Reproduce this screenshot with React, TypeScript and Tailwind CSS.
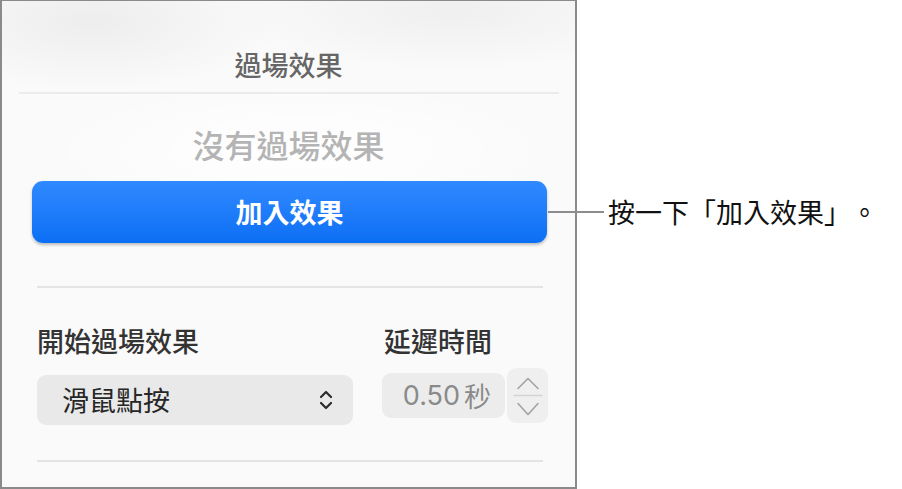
import React from 'react';

const cjk = 'font-["Noto_Sans_CJK_TC","Noto_Sans",sans-serif]';

const SelectChevrons = () => (
    <svg width="16" height="24" viewBox="0 0 16 24" fill="none" stroke="#2b2b2b" strokeWidth="2.2" strokeLinecap="round" strokeLinejoin="round">
        <path d="M3 9 L8 4 L13 9" />
        <path d="M3 15 L8 20 L13 15" />
    </svg>
);

const Stepper = () => (
    <div className="w-[41px] h-[55px] rounded-[9px] bg-[#efefef] flex flex-col items-center justify-center">
        <svg width="30" height="46" viewBox="0 0 30 46" fill="none" stroke="#a3a3a3" strokeWidth="1.6" strokeLinecap="round" strokeLinejoin="round">
            <path d="M5 15.5 L15 5.5 L25 15.5" />
            <path d="M1 22.5 L29 22.5" stroke="#d4d4d4" strokeWidth="1.4" />
            <path d="M5 30.5 L15 41.5 L25 30.5" />
        </svg>
    </div>
);

export default function App() {
    return (
        <div lang="zh-Hant-TW" className={`relative flex w-[902px] h-[489px] bg-white [text-spacing-trim:space-all] ${cjk}`}>
            {/* Panel */}
            <div className="w-[577px] h-[489px] shrink-0 border-x-2 border-b-2 border-t border-[#8a8a8a] bg-[#fafafa] bg-[radial-gradient(ellipse_190px_70px_at_90px_20px,#ededed,transparent),radial-gradient(ellipse_230px_60px_at_450px_10px,#efefef,transparent),radial-gradient(ellipse_260px_70px_at_300px_150px,#ffffff,transparent)] flex flex-col">
                <div className="pt-[47px] text-center text-[27px] leading-[34px] font-medium text-[#666666]">過場效果</div>
                <div className="mt-[10px] ml-[17px] w-[540px] h-[2px] bg-[#ebebeb]" />

                <div className="mt-[31px] text-center text-[32px] leading-[38px] font-medium text-[#b4b4b4]">沒有過場效果</div>

                <button className="mt-[18px] ml-[30px] w-[515px] h-[62px] rounded-[11px] bg-gradient-to-b from-[#2f89ff] to-[#0a6ff5] shadow-[0_2px_3px_rgba(0,0,0,0.25)] text-white text-[27px] font-bold leading-[32px]">
                    加入效果
                </button>

                <div className="mt-[43px] ml-[35px] w-[506px] h-[2px] bg-[#e4e4e4]" />

                <div className="mt-[37px] ml-[35px] grid grid-cols-[345px_auto]">
                    <div className="text-[27px] leading-[32px] font-medium text-[#333333]">開始過場效果</div>
                    <div className="ml-[2px] text-[27px] leading-[32px] font-medium text-[#333333]">延遲時間</div>

                    <div className="mt-[18px] w-[316px] h-[50px] rounded-[9px] bg-[#e9e9e9] flex items-center justify-between pl-[25px] pr-[19px]">
                        <span className="text-[27px] leading-[32px] text-[#262626]">滑鼠點按</span>
                        <SelectChevrons />
                    </div>

                    <div className="mt-[11px] flex items-start gap-[2px]">
                        <div className="mt-[5px] w-[123px] h-[45px] rounded-[9px] bg-[#ececec] flex items-center justify-end pr-[14px] text-[27px] leading-[32px] text-[#8a8a8a]">
                            <span className="font-['Inter',sans-serif] mr-[4px]">0.50</span>
                            <span>秒</span>
                        </div>
                        <Stepper />
                    </div>
                </div>

                <div className="mt-[35px] ml-[35px] w-[506px] h-[2px] bg-[#e4e4e4]" />
            </div>

            {/* Callout */}
            <div className="absolute left-[548px] top-[211px] w-[56px] h-[2px] bg-[#8d8d8d]" />
            <div className="ml-[31px] pt-[196px] text-[27px] leading-[32px] text-[#111111] whitespace-nowrap">
                按一下「加入效果」。
            </div>
        </div>
    );
}
